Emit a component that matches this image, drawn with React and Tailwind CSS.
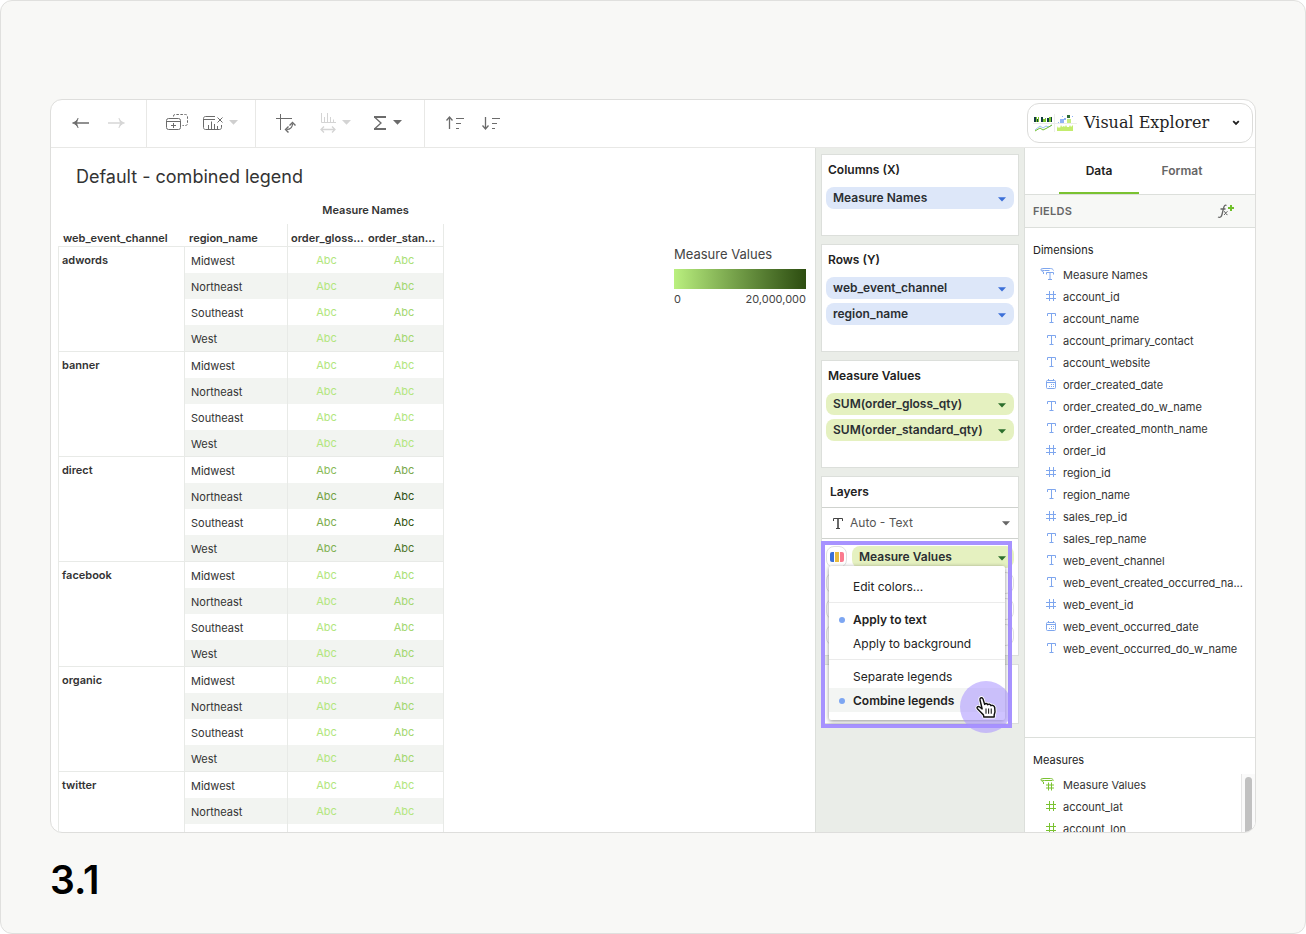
import React, { useState } from 'react';

const LIGHT = '#b2e67e';
const MID = '#aadf76';
const SOFT = '#a3d76f';

// Text colour per cell: [order_gloss_qty, order_standard_qty]
const channels = [
  { name: 'adwords', colors: [[LIGHT, MID], [LIGHT, SOFT], [LIGHT, SOFT], [LIGHT, SOFT]] },
  { name: 'banner', colors: [[LIGHT, LIGHT], [LIGHT, LIGHT], [LIGHT, LIGHT], [LIGHT, LIGHT]] },
  { name: 'direct', colors: [['#8abb59', '#79a84b'], ['#74a246', '#2f5014'], ['#7dad4e', '#31530f'], ['#81b152', '#4d7529']] },
  { name: 'facebook', colors: [[LIGHT, MID], [LIGHT, SOFT], [LIGHT, SOFT], [LIGHT, SOFT]] },
  { name: 'organic', colors: [[LIGHT, MID], [LIGHT, SOFT], [LIGHT, SOFT], [LIGHT, SOFT]] },
  { name: 'twitter', colors: [[LIGHT, LIGHT], [LIGHT, LIGHT]] },
];
const regions = ['Midwest', 'Northeast', 'Southeast', 'West'];

const dimensions = [
  { icon: 'names', label: 'Measure Names' },
  { icon: 'number', label: 'account_id' },
  { icon: 'text', label: 'account_name' },
  { icon: 'text', label: 'account_primary_contact' },
  { icon: 'text', label: 'account_website' },
  { icon: 'date', label: 'order_created_date' },
  { icon: 'text', label: 'order_created_do_w_name' },
  { icon: 'text', label: 'order_created_month_name' },
  { icon: 'number', label: 'order_id' },
  { icon: 'number', label: 'region_id' },
  { icon: 'text', label: 'region_name' },
  { icon: 'number', label: 'sales_rep_id' },
  { icon: 'text', label: 'sales_rep_name' },
  { icon: 'text', label: 'web_event_channel' },
  { icon: 'text', label: 'web_event_created_occurred_na...' },
  { icon: 'number', label: 'web_event_id' },
  { icon: 'date', label: 'web_event_occurred_date' },
  { icon: 'text', label: 'web_event_occurred_do_w_name' },
];

const measures = [
  { icon: 'values', label: 'Measure Values' },
  { icon: 'number', label: 'account_lat' },
  { icon: 'number', label: 'account_lon' },
];

function Caret({ className = '' }) {
  return (
    <svg className={`h-[5px] shrink-0 ${className}`} viewBox="0 0 9 5" fill="currentColor">
      <path d="M0 0h9L4.5 4.8z" />
    </svg>
  );
}

function FieldIcon({ type }) {
  return (
    <svg className="w-[17px] h-4 shrink-0" viewBox="0 0 17 16" fill="none" stroke="currentColor">
      {type === 'number' && <path d="M9.5 2v10M13.5 2v10M6 5.5h10M6 9.5h10" />}
      {type === 'text' && <path d="M7.5 5V2.5h8V5M11.5 2.5v9M9.5 11.5h4" />}
      {type === 'date' && (
        <>
          <rect x="6.5" y="3.5" width="9" height="8" rx="1" />
          <path d="M6.5 5.5h9M8.5 2v2M13.5 2v2" />
          <path d="M11 7.5h1M13 7.5h1M9 9.5h1M11 9.5h1M13 9.5h1" />
        </>
      )}
      {type === 'names' && (
        <>
          <path d="M3.500 5C1.500 4.200 1 3.500 1 2.500C1 1.500 2 1.500 3 1.500h7.500C12 1.500 13 2.200 13.500 3.500M1.500 3c1 .5 2 .5 3 .5h5M3.500 5v2" />
          <path d="M6.500 7.500v-2h7v2M10 5.500v7M8 12.500h4" />
        </>
      )}
      {type === 'values' && (
        <>
          <path d="M3.500 5C1.500 4.200 1 3.500 1 2.500C1 1.500 2 1.500 3 1.500h7.500C12 1.500 13 2.200 13.500 3.500M1.500 3c1 .5 2 .5 3 .5h8M3.500 5v2" />
          <path d="M8.500 5.500v8M11.500 5.500v8M6 8h8M6 11h8" />
        </>
      )}
    </svg>
  );
}

function Toolbar() {
  return (
    <header className="flex items-stretch h-12 shrink-0 border-b border-[#e8e8e6] text-[#6b6b6b]">
      {/* Undo / redo */}
      <div className="flex items-center gap-[19px] px-[21px] pb-[2px] border-r border-[#e8e8e6]">
        <button aria-label="Undo">
          <svg className="w-[17px] h-3" viewBox="0 0 17 12" fill="none" stroke="currentColor" strokeWidth="1.300">
            <path d="M4 6h13" />
            <path d="M6 1.300C5 3.500 3.500 5 .5 6c3 1 4.500 2.500 5.500 4.700L4.500 6z" fill="currentColor" strokeWidth=".8" />
          </svg>
        </button>
        <button aria-label="Redo" className="text-[#d6d6d6]" disabled>
          <svg className="w-[17px] h-3" viewBox="0 0 17 12" fill="none" stroke="currentColor" strokeWidth="1.300">
            <path d="M0 6h13" />
            <path d="M11 1.300C12 3.500 13.500 5 16.500 6c-3 1-4.500 2.500-5.500 4.700L12.500 6z" fill="currentColor" strokeWidth=".8" />
          </svg>
        </button>
      </div>

      {/* Sheet actions */}
      <div className="flex items-center gap-[15px] pl-[19px] pr-[17px] pb-[2px] border-r border-[#e8e8e6]">
        <button aria-label="Duplicate sheet">
          <svg className="w-[22px] h-5" viewBox="0 0 22 20" fill="none" stroke="currentColor">
            <rect x=".5" y="5.500" width="14" height="11" rx="2" />
            <path d="M.5 8.500h14M7.500 10v5M5 12.500h5" />
            <path d="M7.500 3.500V3c0-1 .6-1.500 1.500-1.500h10.500c1.200 0 2 .8 2 2v7c0 1.200-.8 2-2 2h-3" strokeDasharray="2.500 1.500" />
          </svg>
        </button>
        <button aria-label="Clear sheet" className="flex items-center gap-[6px]">
          <svg className="w-5 h-5" viewBox="0 0 20 20" fill="none" stroke="currentColor">
            <path d="M12 3.500H2.500c-1.200 0-2 .8-2 2v9c0 1.200.8 2 2 2h14c1.200 0 2-.8 2-2V12M.5 6.500H12" />
            <path d="M5.500 12v4.500M8.500 8.500v8M11.500 11v5.500M14.500 13v3.500" />
            <path d="M14.500 4.500l5 5M19.500 4.500l-5 5" />
          </svg>
          <Caret className="w-[9px] text-[#cfcfcf]" />
        </button>
      </div>

      {/* Swap, size and totals */}
      <div className="flex items-center pl-5 pr-[22px] pb-[2px] border-r border-[#e8e8e6]">
        <button aria-label="Swap rows and columns">
          <svg className="w-5 h-5" viewBox="0 0 20 20" fill="none" stroke="currentColor">
            <path d="M0 5.500h16M4.500 1v16" />
            <path d="M10.500 16.500c4.500 0 6-2 6-6" strokeWidth="1.200" />
            <path d="M13.500 12.500l3-3 3 3M12.500 13.500l-3 3 3 3" strokeWidth="1.400" />
          </svg>
        </button>
        <button aria-label="Mark size" className="flex items-center gap-[6px] ml-6 text-[#d4d4d4]" disabled>
          <svg className="w-4 h-5" viewBox="0 0 16 20" fill="none" stroke="currentColor">
            <path d="M1.500 0v9.500H16M4.500 4v5M7.500 0v9M10.500 4v5M13.500 6.500v3" />
            <path d="M1.500 16.500h13M4 13.500l-3 3 3 3M12 13.500l3 3-3 3" strokeWidth="1.300" />
          </svg>
          <Caret className="w-[9px]" />
        </button>
        <button aria-label="Totals" className="flex items-center gap-[6px] ml-[22px]">
          <svg className="w-[14px] h-4" viewBox="0 0 14 16" fill="none" stroke="currentColor">
            <path d="M1 2h12" strokeWidth="2" />
            <path d="M1 14h12" strokeWidth="2" />
            <path d="M2 2.500L8 8l-6 5.500" strokeWidth="1.300" />
          </svg>
          <Caret className="w-[9px]" />
        </button>
      </div>

      {/* Sorting */}
      <div className="flex items-center gap-4 pl-5 pb-[2px]">
        <button aria-label="Sort ascending">
          <svg className="w-5 h-4" viewBox="0 0 20 16" fill="none" stroke="currentColor">
            <path d="M4.500 3v11M1.500 5.500l3-3.500 3 3.500" strokeWidth="1.300" />
            <path d="M11 3.500h8M11 8.500h5M11 13.500h3" />
          </svg>
        </button>
        <button aria-label="Sort descending">
          <svg className="w-5 h-4" viewBox="0 0 20 16" fill="none" stroke="currentColor">
            <path d="M4.500 2v11M1.500 10.500l3 3.500 3-3.500" strokeWidth="1.300" />
            <path d="M11 3.500h8M11 8.500h5M11 13.500h3" />
          </svg>
        </button>
      </div>

      <button className="flex items-center w-[226px] h-10 mt-[3px] mr-[2px] ml-auto pl-[5px] pr-3 rounded-xl border border-[#dcdcda] bg-white text-[#1f1f1f]">
        <ExplorerLogo />
        <span className="ml-[7px] font-['DejaVu_Serif',serif] text-base leading-6">Visual Explorer</span>
        <svg className="w-2 h-[6px] ml-auto" viewBox="0 0 8 6" fill="none" stroke="currentColor" strokeWidth="1.800">
          <path d="M1.200 1.200L4 4l2.800-2.800" />
        </svg>
      </button>
    </header>
  );
}

function ExplorerLogo() {
  return (
    <svg className="w-11 h-[18px] shrink-0" viewBox="0 0 44 18">
      <path d="M0 9.500h44M21.500 0v18" stroke="#ececec" fill="none" />
      <path d="M1 3h2v5H1zM4 5h1v3H4zM8 3h2v5H8zM14 4h2v4h-2zM18 3h1v5h-1z" fill="#123c3f" />
      <path d="M3 3h1v5H3zM5 3h1v5H5zM10 5h2v3h-2zM12 4h1v4h-1zM16 3h2v5h-2z" fill="#79c52e" />
      <path d="M2 16l5-4 3 2 3-2 3 1 3-2" stroke="#9cc0ef" fill="none" />
      <path d="M2 17l5-3 3 2 4-2 5-3" stroke="#6fbe2f" fill="none" />
      <path d="M27 5h4v4h-4zM31 4h2v2h-2z" fill="#8fb3f5" />
      <path d="M34 1h3v3h-3z" fill="#2e6b35" />
      <path d="M34 5h4v4h-4z" fill="#c5ee80" />
      <path d="M39 2h1v1h-1zM29 2h1v1h-1zM25 8h1v1h-1z" fill="#8fb3f5" />
      <path d="M24 17v-5l1 2 1-1 1 1 1-3 1 2 2-1 1 1 1-2 1 2h2l1-2 1 2 1-1 1-1v6z" fill="#c3ec6d" />
    </svg>
  );
}

function PivotTable() {
  return (
    <table className="table-fixed w-[386px] border-separate border-spacing-0 text-[11px] leading-4 text-[#333]">
      <colgroup>
        <col className="w-[126px]" />
        <col className="w-[103px]" />
        <col className="w-[78px]" />
        <col className="w-[79px]" />
      </colgroup>
      <thead>
        <tr className="h-[27px]">
          <td colSpan={2} />
          <th colSpan={2} className="p-0 pb-[2px] font-semibold">Measure Names</th>
        </tr>
        <tr className="h-[23px] text-left align-bottom">
          <th className="p-0 pl-[5px] font-semibold border-b border-[#e8eae7]">web_event_channel</th>
          <th className="p-0 pl-[5px] font-semibold border-b border-[#e8eae7]">region_name</th>
          <th className="p-0 pl-[3px] font-semibold border-b border-l border-[#e8eae7]">order_gloss...</th>
          <th className="p-0 pl-[3px] font-semibold border-b border-r border-[#e8eae7]">order_stan...</th>
        </tr>
      </thead>
      {channels.map((channel) => {
        const partial = channel.colors.length < regions.length;
        return (
          <tbody key={channel.name}>
            {channel.colors.map((colors, i) => {
              const last = i === regions.length - 1;
              const line = last ? 'border-b h-[27px]' : 'h-[26px]';
              const stripe = i % 2 === 1 ? 'bg-[#f2f4f1]' : '';
              return (
                <tr key={regions[i]}>
                  {i === 0 && (
                    <th
                      rowSpan={channel.colors.length}
                      className={`p-0 pt-[5px] pl-[3px] text-left align-top font-semibold border-l border-[#e8eae7] ${partial ? '' : 'border-b'}`}
                    >
                      {channel.name}
                    </th>
                  )}
                  <td className={`p-0 pt-[2px] pl-[6px] border-l border-[#e8eae7] ${line} ${stripe}`}>{regions[i]}</td>
                  <td className={`p-0 text-center border-l border-[#e8eae7] ${line} ${stripe}`} style={{ color: colors[0] }}>Abc</td>
                  <td className={`p-0 text-center border-r border-[#e8eae7] ${line} ${stripe}`} style={{ color: colors[1] }}>Abc</td>
                </tr>
              );
            })}
            {/* Rows still to be loaded */}
            {partial && (
              <tr className="h-[26px]">
                <td className="border-l border-[#e8eae7]" />
                <td className="border-l border-[#e8eae7]" />
                <td className="border-l border-[#e8eae7]" />
                <td className="border-r border-[#e8eae7]" />
              </tr>
            )}
          </tbody>
        );
      })}
    </table>
  );
}

function Legend() {
  return (
    <div className="w-[132px] mt-[47px] text-[#444]">
      <h3 className="text-[13px] leading-5">Measure Values</h3>
      <div className="h-5 mt-[5px] bg-linear-to-r from-[#baf07f] to-[#2d4d10]" />
      <div className="flex justify-between mt-[2px] text-[11px] leading-4">
        <span>0</span>
        <span>20,000,000</span>
      </div>
    </div>
  );
}

function Pill({ label, green }) {
  return (
    <button
      className={`flex items-center justify-between w-full h-[22px] pl-[7px] pr-2 rounded-lg text-xs font-semibold text-[#2b2f33]
        ${green ? 'bg-[#e5f1c0]' : 'bg-[#dde7f9]'}`}
    >
      {label}
      <Caret className={green ? 'w-2 mt-[2px] text-[#2c6e2c]' : 'w-2 mt-[2px] text-[#3b6fd8]'} />
    </button>
  );
}

function Shelf({ title, fields, green }) {
  return (
    <section className="px-1 pb-[26px] border border-[#dcdfdb] bg-white">
      <h3 className="h-8 pt-[5px] pl-[2px] text-xs leading-5 font-semibold text-[#222]">{title}</h3>
      <div className="flex flex-col gap-1">
        {fields.map((f) => <Pill key={f} label={f} green={green} />)}
      </div>
    </section>
  );
}

function MenuItem({ label, checked, active }) {
  return (
    <button
      role="menuitem"
      className={`flex items-center w-full h-6 pt-[2px] pl-[10px] text-xs text-[#222]
        ${checked ? 'font-semibold' : ''} ${active ? 'bg-[#f3f5f3]' : ''}`}
    >
      <span className={`w-[6px] h-[6px] mr-2 rounded-full ${checked ? 'bg-[#7da6f2]' : ''}`} />
      {label}
    </button>
  );
}

function LayersCard() {
  return (
    <section className="relative border border-[#dcdfdb] bg-white">
      <h3 className="h-[31px] pl-2 text-xs leading-[30px] font-semibold text-[#222] border-b border-[#cfd2ce]">Layers</h3>
      <div className="relative flex items-center h-[31px] border-b border-[#cfd2ce]">
        <svg className="w-[10px] h-3 ml-[11px] text-[#444]" viewBox="0 0 10 12" fill="none" stroke="currentColor">
          <path d="M.5 4V1.500h9V4M3 11.500h4" />
          <path d="M5 1.500v10" strokeWidth="1.600" />
        </svg>
        <select aria-label="Mark type" className="grow h-full pl-[7px] appearance-none bg-transparent text-xs text-[#555] outline-none">
          <option>Auto - Text</option>
        </select>
        <Caret className="w-2 absolute right-2 text-[#666] pointer-events-none" />
      </div>

      <div className="flex flex-col gap-1 pt-[7px] pb-[9px] px-1">
        <div className="flex gap-[5px]">
          <button aria-label="Color" className="flex items-center justify-center w-[21px] h-[22px] shrink-0 rounded-lg border border-[#e0e0e0]">
            <ColorSwatch />
          </button>
          <Pill label="Measure Values" green />
        </div>
        {['Size', 'Label', 'Detail'].map((slot) => (
          <div key={slot} className="h-[22px] rounded-lg border border-[#e0e0e0]" />
        ))}
      </div>

      {/* Highlight frame around the colour menu */}
      <div className="absolute z-10 -left-px top-16 w-[191px] h-[187px] border-4 border-[#a792ff] pointer-events-none" />

      {/* Colour menu */}
      <div role="menu" className="absolute z-20 left-[7px] top-[89px] w-[176px] py-2 bg-white rounded-xs shadow-[0_1px_4px_rgba(0,0,0,0.45)]">
        <MenuItem label="Edit colors..." />
        <hr className="my-1 border-[#ebebeb]" />
        <MenuItem label="Apply to text" checked />
        <MenuItem label="Apply to background" />
        <hr className="my-1 border-[#ebebeb]" />
        <MenuItem label="Separate legends" />
        <MenuItem label="Combine legends" checked active />

        <div className="absolute left-[131px] top-[115px] flex items-center justify-center w-[52px] h-[52px] rounded-full bg-[#a792ff]/55">
          <PointerHand />
        </div>
      </div>
    </section>
  );
}

function ColorSwatch() {
  return (
    <svg className="w-[14px] h-[10px] shrink-0" viewBox="0 0 14 10">
      <path d="M2 0h2v10H2a2 2 0 0 1-2-2V2a2 2 0 0 1 2-2z" fill="#3a6fd8" />
      <path d="M5 0h4v10H5z" fill="#e8bb3c" />
      <path d="M10 0h2a2 2 0 0 1 2 2v6a2 2 0 0 1-2 2h-2z" fill="#fb7a8e" />
    </svg>
  );
}

function PointerHand() {
  const hand = 'M8 20L7.500 18C6 16.500 3.500 14 1.800 12.200C.8 10.800 2.300 9.300 4 10.500L6.300 12.300L4.300 3.800C3.900 1.300 6.500 .8 7.200 3L8.700 8C9.500 6.800 11 7 11.600 8.400C12.600 7.300 14.200 7.700 14.700 9.200C16.200 8.500 17.900 9.300 18.300 11C18.900 14.200 18.700 16 17.800 18V20Z';
  return (
    <svg className="w-[22px] h-[22px]" viewBox="0 0 20 21" strokeLinejoin="round" overflow="visible">
      <path d={hand} fill="#fff" stroke="#fff" strokeWidth="3" />
      <path d={hand} fill="#fff" stroke="#111" strokeWidth="1.400" />
      <path d="M10 12v5M12.500 12v5M15 12v5" fill="none" stroke="#111" />
    </svg>
  );
}

function FieldList({ items, color }) {
  return (
    <ul className="grow pl-[15px] overflow-hidden">
      {items.map((item) => (
        <li key={item.label} className={`flex items-center gap-[6px] h-[22px] ${color}`}>
          <FieldIcon type={item.icon} />
          <span className="text-[11px] text-[#333] whitespace-nowrap">{item.label}</span>
        </li>
      ))}
    </ul>
  );
}

function DataPanel() {
  const [tab, setTab] = useState('Data');

  return (
    <aside className="flex flex-col w-[231px] shrink-0 border-l border-[#dcdfdb] bg-white">
      <div role="tablist" className="flex h-[47px] shrink-0 pl-[34px] border-b border-[#dcdfdb] text-xs font-semibold">
        {['Data', 'Format'].map((name) => (
          <button
            key={name}
            role="tab"
            aria-selected={tab === name}
            onClick={() => setTab(name)}
            className={`h-[46px] pt-[2px] border-b-2 ${name === 'Data' ? 'w-20' : 'w-[86px]'}
              ${tab === name ? 'border-[#7ac231] text-[#222]' : 'border-transparent text-[#666]'}`}
          >
            {name}
          </button>
        ))}
      </div>

      <div className="flex items-center justify-between h-[33px] shrink-0 pl-2 pr-5 border-b border-[#dcdfdb] bg-[#f7f8f6]">
        <h2 className="text-[11px] font-semibold tracking-wide text-[#666]">FIELDS</h2>
        <button aria-label="Add calculated field" className="text-[#666]">
          <svg className="w-[18px] h-4" viewBox="0 0 18 16" fill="none" stroke="currentColor" strokeWidth="1.300">
            <path d="M9.500 2.500C8 1.500 7 3 6.500 5.500L5 11.500C4.500 14 3 15 1 14M3.500 6h5" />
            <path d="M7 8.500c1.500-.5 1.800 4 3.500 3.200M10.500 8.200L7 12" strokeWidth="1" />
            <path d="M14 2v6M11 5h6" stroke="#6fc02a" strokeWidth="2" />
          </svg>
        </button>
      </div>

      <section className="grow min-h-0 overflow-hidden">
        <h3 className="h-9 pt-3 pl-2 text-[11px] leading-5 text-[#222]">Dimensions</h3>
        <FieldList items={dimensions} color="text-[#7ea6ee]" />
      </section>

      <section className="h-[95px] shrink-0 border-t border-[#dcdfdb] overflow-hidden">
        <h3 className="h-9 pt-3 pl-2 text-[11px] leading-5 text-[#222]">Measures</h3>
        <div className="flex">
          <FieldList items={measures} color="text-[#7ac231]" />
          <div className="w-[14px] pt-[3px] px-[3px] border-l border-[#e6e6e6] bg-[#fafafa]">
            <div className="h-full rounded-t-full bg-[#c1c1c1]" />
          </div>
        </div>
      </section>
    </aside>
  );
}

export default function App() {
  return (
    <div className="h-screen bg-white font-['Inter',sans-serif]">
      <div className="flex flex-col h-full px-[49px] pt-[98px] rounded-xl border border-[#e0e0de] bg-[#f8f8f6]">
        <div className="flex flex-col grow min-h-0 rounded-xl border border-[#dededc] bg-white overflow-hidden">
          <Toolbar />

          <div className="flex grow min-h-0">
            <main className="grow min-w-0 overflow-hidden">
              <h1 className="h-[49px] pt-[17px] pl-[25px] text-lg leading-6 text-[#333]">Default - combined legend</h1>
              <div className="flex items-start justify-between pl-[7px] pr-[9px]">
                <PivotTable />
                <Legend />
              </div>
            </main>

            <div className="flex flex-col gap-2 w-[209px] shrink-0 px-[5px] pt-[6px] border-l border-[#dcdfdb] bg-[#eaede8]">
              <Shelf title="Columns (X)" fields={['Measure Names']} />
              <Shelf title="Rows (Y)" fields={['web_event_channel', 'region_name']} />
              <Shelf title="Measure Values" fields={['SUM(order_gloss_qty)', 'SUM(order_standard_qty)']} green />
              <LayersCard />
              <div className="h-[60px] shrink-0 border border-[#dcdfdb] bg-white" />
            </div>

            <DataPanel />
          </div>
        </div>

        <p className="h-[100px] shrink-0 pt-[23px] text-[39px] leading-[48px] font-semibold text-black">3.1</p>
      </div>
    </div>
  );
}
